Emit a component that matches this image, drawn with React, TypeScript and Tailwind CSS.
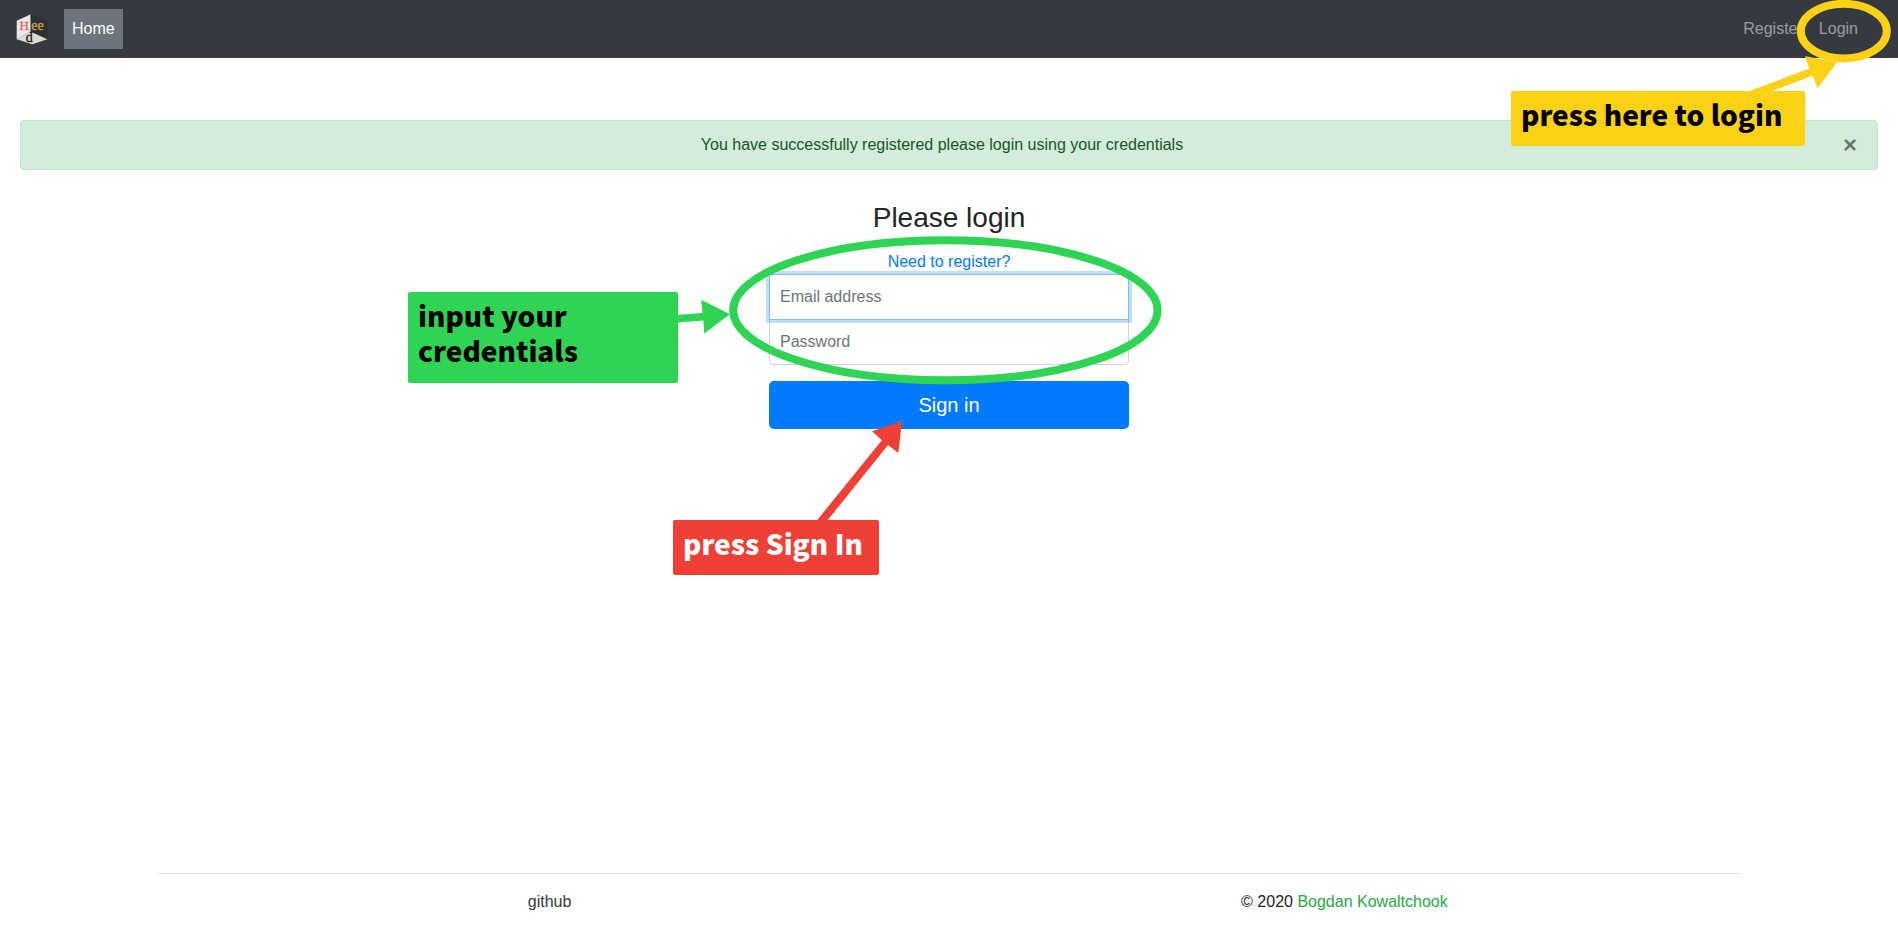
import React from "react";

function Logo() {
  return (
    <svg className="h-8 w-8" viewBox="0 0 32 32" role="img" aria-label="Heed">
      <path d="M0.7 7.7 L14.7 1.3 V18.8 L0.7 26.3 Z" fill="#e9e9ec" />
      <path d="M14.7 1.3 L31.3 7.7 V26.3 L14.7 18.8 Z" fill="#2b3033" />
      <path d="M14.7 18.8 L31.3 26.3 L16.3 31.3 L0.7 26.3 Z" fill="#dedcd0" />
      <g fontFamily="'Liberation Serif', serif" strokeWidth="0.3">
        <text x="3.6" y="17.2" fontSize="13" fill="#ee5f5b" stroke="#ee5f5b">H</text>
        <text x="15.3" y="17.2" fontSize="14" fill="#d9a04a" stroke="#d9a04a">ee</text>
        <text x="9.8" y="29.3" fontSize="14" fill="#111111" stroke="#111111">d</text>
      </g>
    </svg>
  );
}

type NoteProps = { className: string; children: React.ReactNode };

function Note({ className, children }: NoteProps) {
  return (
    <div
      className={
        "absolute rounded-xs px-[10px] pt-[6px] text-left font-['Noto_Sans_CJK_SC',sans-serif] text-[28px] leading-[35px] font-black whitespace-nowrap " +
        className
      }
    >
      {children}
    </div>
  );
}

function LoginHint() {
  return (
    <div className="pointer-events-none absolute top-0 right-0 z-20 h-[150px] w-[398px]">
      <svg className="absolute inset-0 h-full w-full" viewBox="1500 0 398 150" fill="#fcd116" aria-hidden="true">
        <ellipse cx="1843.8" cy="31.1" rx="43" ry="27.3" fill="none" stroke="#fcd116" strokeWidth="8" />
        <path d="M1747 92 L1809.3 68.6 L1805 56 L1837 62.5 L1817.5 88 L1812.7 75.8 L1769 92 Z" />
      </svg>
      <Note className="top-[91px] left-[11px] h-[55px] w-[294px] bg-[#fcd116] text-black">press here to login</Note>
    </div>
  );
}

function FormHints() {
  return (
    <div className="pointer-events-none absolute top-1 -left-[354px] z-20 h-[400px] w-[780px]">
      <svg className="absolute inset-0 h-full w-full" viewBox="400 190 780 400" aria-hidden="true">
        <ellipse cx="945.4" cy="310.3" rx="212.2" ry="70" fill="none" stroke="#30d455" strokeWidth="8" />
        <path d="M676 315 L702.5 313 L701.2 299.7 L730 314.3 L704.3 333.5 L703.3 320.5 L676 322.8 Z" fill="#30d455" />
        <path d="M816.5 521 L881.8 440.3 L872 431.3 L902 421 L898.3 453 L888 445 L827 521 Z" fill="#ef4037" />
      </svg>
      <Note className="top-[102px] left-[8px] h-[91px] w-[270px] bg-[#30d455] text-black">
        input your
        <br />
        credentials
      </Note>
      <Note className="top-[330px] left-[273px] h-[55px] w-[206px] bg-[#ef4037] text-white">press Sign In</Note>
    </div>
  );
}

export default function App() {
  return (
    <div className="flex min-h-screen flex-col overflow-x-hidden bg-white font-['Liberation_Sans',Arial,sans-serif] text-base text-[#212529]">
      <header className="relative">
        <nav className="flex h-[58px] items-center bg-[#343a40] px-4">
          <a href="#home" className="mr-4">
            <Logo />
          </a>
          <a href="#home" className="bg-[#6c757d] p-2 text-white">
            Home
          </a>
          <div className="mr-4 ml-auto flex">
            <a href="#register" className="p-2 text-white/50">
              Register
            </a>
            <a href="#login" className="p-2 text-white/50">
              Login
            </a>
          </div>
        </nav>
        <LoginHint />
      </header>

      <div
        role="alert"
        className="mx-5 mt-[62px] flex items-center rounded border border-[#c3e6cb] bg-[#d4edda] px-5 py-3 text-[#155724]"
      >
        <p className="flex-1 text-center">You have successfully registered please login using your credentials</p>
        <button type="button" aria-label="Close" className="text-2xl leading-6 font-bold text-black/50">
          ×
        </button>
      </div>

      <main className="mb-10 flex justify-center pt-4">
        <form className="relative w-[390px] p-[15px] text-center" onSubmit={(e) => e.preventDefault()}>
          <h1 className="mb-4 text-[28px] leading-[33px]">Please login</h1>
          <a href="#register" className="block text-[#007bff]">
            Need to register?
          </a>
          <input
            id="email"
            type="email"
            aria-label="Email address"
            placeholder="Email address"
            className="relative z-10 block h-[46px] w-full border border-[#80bdff] bg-white p-[10px] shadow-[0_0_0_3px_rgba(0,123,255,0.25)] outline-none placeholder:text-[#6c757d]"
          />
          <input
            id="password"
            type="password"
            aria-label="Password"
            placeholder="Password"
            className="-mt-px mb-4 block h-[46px] w-full rounded-b border border-[#ced4da] bg-white p-[10px] outline-none placeholder:text-[#6c757d]"
          />
          <button type="submit" className="block h-12 w-full rounded-[5px] bg-[#007bff] text-xl text-white">
            Sign in
          </button>
          <FormHints />
        </form>
      </main>

      <footer className="mx-[8.3333%] mt-auto grid grid-cols-2 border-t border-[#dee2e6] pt-4 pb-4 text-center">
        <div className="pr-2">
          <a href="#github" className="text-[#343a40]">
            github
          </a>
        </div>
        <div>
          © 2020{" "}
          <a href="#author" className="text-[#28a745]">
            Bogdan Kowaltchook
          </a>
        </div>
      </footer>
    </div>
  );
}
